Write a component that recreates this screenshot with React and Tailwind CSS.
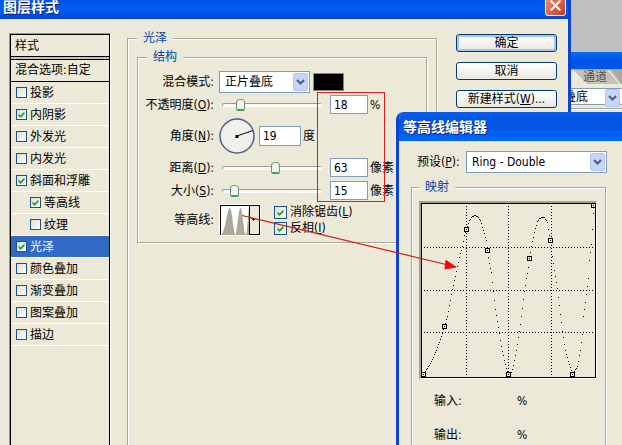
import React from 'react';
import { X } from 'lucide-react';

const styles = [
    { name: '投影' },
    { name: '内阴影', checked: true },
    { name: '外发光' },
    { name: '内发光' },
    { name: '斜面和浮雕', checked: true },
    { name: '等高线', checked: true, nested: true },
    { name: '纹理', nested: true },
    { name: '光泽', checked: true, active: true },
    { name: '颜色叠加' },
    { name: '渐变叠加' },
    { name: '图案叠加' },
    { name: '描边' },
];

// Ring - Double contour, on a 174 x 174 grid
const curve = [
    [2, 171], [9, 160], [15, 147], [20, 133], [23, 123], [26, 113], [28, 102], [31, 86], [34, 73],
    [36, 63], [39, 50], [41, 43], [43, 32], [45, 26], [48, 17], [51, 13], [54, 12], [56, 13],
    [59, 17], [62, 27], [65, 37], [66, 47], [68, 60], [70, 69], [72, 88], [74, 106], [78, 130],
    [80, 143], [83, 157], [85, 165], [87, 171], [90, 169], [92, 162], [95, 147], [98, 128],
    [100, 113], [103, 88], [105, 75], [107, 64], [108, 55], [110, 43], [113, 29], [116, 18],
    [118, 15], [121, 14], [123, 14], [126, 19], [127, 26], [129, 37], [131, 53], [133, 67],
    [136, 85], [138, 102], [141, 128], [144, 147], [147, 158], [150, 167], [151, 171], [156, 163],
    [159, 147], [161, 131], [162, 113], [164, 99], [167, 75], [168, 57], [170, 41], [171, 26],
    [172, 10], [173, 2],
];

const handles = [[2, 171], [23, 123], [45, 26], [66, 47], [87, 171], [108, 55], [129, 37], [151, 171], [172, 2]];

const dots = [];
for (let i = 0; i < curve.length - 1; i++) {
    const [x1, y1] = curve[i];
    const [x2, y2] = curve[i + 1];
    for (let x = x1; x < x2; x++) {
        dots.push([x, Math.round(y1 + ((y2 - y1) * (x - x1)) / (x2 - x1))]);
    }
}

const Check = ({ id, checked, small }) => (
    <span className="grid shrink-0">
        <input
            id={id}
            type="checkbox"
            defaultChecked={checked}
            className={`peer col-start-1 row-start-1 appearance-none border border-[#1d5281] bg-linear-to-br from-[#dcdcd7] to-white ${small ? 'size-[11px]' : 'size-[13px]'}`}
        />
        <svg viewBox="0 0 11 11" className="pointer-events-none invisible col-start-1 row-start-1 size-[11px] place-self-center peer-checked:visible">
            <path d="M2.5 4.5v2.4l2 2 4-4V2.5l-4 4z" fill="#21a121" />
        </svg>
    </span>
);

const Select = ({ id, value, className }) => (
    <span className={`grid ${className}`}>
        <select id={id} className="col-start-1 row-start-1 h-[22px] w-full appearance-none border border-[#7f9db9] bg-white pl-[5px] pr-5">
            <option>{value}</option>
        </select>
        <Arrow />
    </span>
);

const Arrow = () => (
    <svg viewBox="0 0 15 18" className="pointer-events-none col-start-1 row-start-1 mr-[2px] h-[18px] w-[15px] self-center justify-self-end">
        <rect x="0.5" y="0.5" width="14" height="17" rx="1.5" fill="#c5d5fc" stroke="#b3c7f4" />
        <path d="M4 7l3.5 3.5L11 7" fill="none" stroke="#4d6185" strokeWidth="2.2" />
    </svg>
);

const Group = ({ title, inset, className, children }) => (
    <fieldset className={`min-w-0 border border-[#aca899] shadow-[1px_1px_0_#fff,inset_1px_1px_0_#fff] ${className}`}>
        <legend className={`bg-[#ece9d8] px-[6px] text-[#0046a8] ${inset ? 'ml-[9px]' : ''}`}>{title}</legend>
        {children}
    </fieldset>
);

const FieldLabel = ({ id, text, hotkey }) => (
    <label htmlFor={id} className="w-[76px] shrink-0 whitespace-nowrap text-right">
        {text}{hotkey && <>(<u>{hotkey}</u>)</>}:
    </label>
);

const NumberInput = ({ id, value, className }) => (
    <input id={id} defaultValue={value} className={`border border-[#7f9db9] bg-white pl-[3px] ${className}`} />
);

const SliderRow = ({ id, text, hotkey, value, position, unit }) => (
    <div className="flex h-[19px] items-center">
        <FieldLabel id={id} text={text} hotkey={hotkey} />
        <input
            type="range"
            aria-label={text}
            defaultValue={position}
            className="ml-2 h-3 w-[100px] shrink-0 appearance-none bg-transparent [&::-webkit-slider-runnable-track]:h-[4px] [&::-webkit-slider-runnable-track]:rounded-xs [&::-webkit-slider-runnable-track]:border [&::-webkit-slider-runnable-track]:border-[#9d9c99] [&::-webkit-slider-runnable-track]:border-b-white [&::-webkit-slider-runnable-track]:border-r-white [&::-webkit-slider-runnable-track]:bg-[#f8f7f1] [&::-webkit-slider-thumb]:mt-[-5px] [&::-webkit-slider-thumb]:h-3 [&::-webkit-slider-thumb]:w-[9px] [&::-webkit-slider-thumb]:appearance-none [&::-webkit-slider-thumb]:rounded-t-[4px] [&::-webkit-slider-thumb]:rounded-b-[2px] [&::-webkit-slider-thumb]:border [&::-webkit-slider-thumb]:border-[#778892] [&::-webkit-slider-thumb]:border-t-[#4fb84f] [&::-webkit-slider-thumb]:border-b-2 [&::-webkit-slider-thumb]:border-b-[#38a850] [&::-webkit-slider-thumb]:bg-[#f3f3ef]"
        />
        <NumberInput id={id} value={value} className="ml-2 h-[19px] w-[38px] shrink-0" />
        <span className="ml-[2px] whitespace-nowrap">{unit}</span>
    </div>
);

const DialogButton = ({ primary, children }) => (
    <button
        className={`h-[18px] whitespace-nowrap rounded-[3px] border border-[#003c74] bg-linear-to-b from-white to-[#e9e8e0] leading-4 ${primary ? 'shadow-[inset_0_0_0_2px_#a9c4f0]' : ''}`}
    >
        {children}
    </button>
);

const BackPanel = () => (
    <div className="absolute -bottom-4 right-0 top-[52px] w-[60px] bg-[#ece9d8]">
        <div className="h-[17px] bg-linear-to-b from-[#0a6cf5] via-[#0054e3] to-[#0058ee]" />
        <div className="grid h-[15px]">
            <svg viewBox="0 0 60 15" className="col-start-1 row-start-1 h-[15px] w-[60px]">
                <rect width="60" height="15" fill="#aaa8a2" />
                <path d="M0 1h11l13 14H0z" fill="#ece9d8" />
                <path d="M12 1h38l9 14H24z" fill="#c3c1b8" />
                <path d="M11 1l13 14M46 1l12 14" fill="none" stroke="#fff" />
            </svg>
            <span className="col-start-1 row-start-1 pl-[21px] leading-[17px] text-[#55534d]">通道</span>
        </div>
        <div className="mt-1 grid h-[17px] border-y border-[#7f9db9] bg-white">
            <span className="col-start-1 row-start-1 pl-[2px] leading-[17px]">叠底</span>
            <Arrow />
        </div>
        <div className="mt-[3px] border-t border-[#aca899] bg-white pt-px" />
    </div>
);

const StyleList = () => (
    <div className="mt-[14px] w-[102px] shrink-0 border-l border-t border-r border-[#9a988a] border-r-white">
        <div className="h-full border-x border-t border-black">
            <div className="h-[22px] border-b border-black pl-1 leading-[22px]">样式</div>
            <div className="h-[2px] bg-[#c9bfc0]" />
            <div className="h-[23px] border-y border-black pl-1 leading-[21px]">混合选项:自定</div>
            <ul>
                {styles.map((s) => (
                    <li
                        key={s.name}
                        className={`flex h-[22px] items-center gap-[3px] border-b border-white ${s.nested ? 'pl-[19px]' : 'pl-[5px]'} ${s.active ? 'bg-[#316ac5] text-white' : ''}`}
                    >
                        <Check id={s.name} checked={s.checked} small />
                        <label htmlFor={s.name}>{s.name}</label>
                    </li>
                ))}
            </ul>
        </div>
    </div>
);

const ContourThumb = () => (
    <svg viewBox="0 0 42 32" className="ml-[5px] h-8 w-[42px] shrink-0">
        <rect width="42" height="32" fill="#fff" />
        <rect x="1.5" y="1.5" width="39" height="29" fill="#ece9d8" stroke="#000" />
        <rect x="2" y="2" width="28" height="29" fill="#fff" />
        <path d={`M2 31 ${curve.map(([x, y]) => `L${2 + x * 0.162} ${2 + y * 0.168}`).join(' ')} V31z`} fill="#aca899" />
        <path d="M30.5 1v30" stroke="#000" />
        <path d="M32 14h5l-2.500 3z" fill="#000" />
    </svg>
);

const LayerStyleDialog = () => (
    <div className="absolute -bottom-4 left-0 right-[51px] top-0 flex flex-col border-r-[3px] border-[#0842d6] bg-[#ece9d8]">
        <div className="flex h-[19px] shrink-0 items-end justify-between bg-linear-to-b from-[#0055e5] via-[#005cf5] to-[#0048d8] pl-[3px] pr-[2px]">
            <h1 className="pb-[5px] text-[14px] font-bold leading-[14px] text-white [text-shadow:1px_1px_0_#0a246a]">图层样式</h1>
            <button aria-label="关闭" className="mb-[3px] flex size-[21px] shrink-0 items-center justify-center rounded-[3px] border border-white bg-linear-to-br from-[#f0906f] to-[#c8371a] text-white">
                <X size={17} strokeWidth={3} />
            </button>
        </div>
        <div className="flex min-h-0 flex-1 pl-[9px] pr-[11px]">
            <StyleList />
            <Group title="光泽" className="ml-4 mt-3 flex-1 px-[9px] pt-[5px]">
                <Group title="结构" inset className="pb-[6px] pt-[7px]">
                    <div className="flex items-center">
                        <FieldLabel id="blend" text="混合模式" />
                        <Select id="blend" value="正片叠底" className="ml-[5px] w-[91px]" />
                        <button aria-label="颜色" className="ml-[3px] h-[18px] w-[31px] border border-[#8a887c] bg-black" />
                    </div>
                    <div className="mt-[2px]">
                        <SliderRow id="opacity" text="不透明度" hotkey="O" value="18" position={15} unit="%" />
                    </div>
                    <div className="my-1 flex items-center">
                        <FieldLabel id="angle" text="角度" hotkey="N" />
                        <svg viewBox="0 0 36 36" className="ml-[5px] size-9 shrink-0">
                            <circle cx="18" cy="18" r="17" fill="#f1f0ec" stroke="#51618f" strokeWidth="1.500" />
                            <path d="M18 18l16-5.500" stroke="#000" />
                            <rect x="16.500" y="17" width="3" height="3" />
                        </svg>
                        <NumberInput id="angle" value="19" className="ml-1 h-5 w-[42px]" />
                        <span className="ml-[2px]">度</span>
                    </div>
                    <SliderRow id="distance" text="距离" hotkey="D" value="63" position={54} unit="像素" />
                    <div className="mt-1">
                        <SliderRow id="size" text="大小" hotkey="S" value="15" position={8} unit="像素" />
                    </div>
                    <div className="mt-1 flex items-center">
                        <span className="w-[76px] shrink-0 text-right">等高线:</span>
                        <ContourThumb />
                        <div className="ml-[13px] flex flex-col gap-[2px]">
                            <div className="flex items-center gap-[3px]">
                                <Check id="antialias" checked />
                                <label htmlFor="antialias">消除锯齿(<u>L</u>)</label>
                            </div>
                            <div className="flex items-center gap-[3px]">
                                <Check id="invert" checked />
                                <label htmlFor="invert">反相(<u>I</u>)</label>
                            </div>
                        </div>
                    </div>
                </Group>
            </Group>
            <div className="ml-[19px] mt-[15px] flex w-[101px] shrink-0 flex-col gap-[10px]">
                <DialogButton primary>确定</DialogButton>
                <DialogButton>取消</DialogButton>
                <DialogButton>新建样式(<u>W</u>)...</DialogButton>
            </div>
        </div>
    </div>
);

const ContourGraph = () => (
    <div className="w-[178px] border-l-2 border-t-2 border-b border-r border-[#a5a396] border-b-white border-r-white">
        <svg viewBox="0 0 175 175" className="block w-full" shapeRendering="crispEdges">
            <rect x="0.5" y="0.5" width="174" height="174" fill="none" stroke="#000" />
            <path d="M45.500 0v175M87.500 0v175M130.500 0v175M0 44.500h175M0 87.500h175M0 129.500h175" stroke="#000" strokeDasharray="1 2" />
            {dots.map(([x, y]) => (
                <rect key={x} x={x} y={y} width="1" height="1" />
            ))}
            {handles.map(([x, y]) => (
                <g key={x}>
                    <rect x={x - 1.5} y={y - 1.5} width="4" height="4" fill="#ece9d8" stroke="#000" />
                    <rect x={x} y={y} width="1" height="1" />
                </g>
            ))}
        </svg>
    </div>
);

const ContourEditor = () => (
    <div className="absolute -bottom-4 -right-4 left-[396px] top-[112px] overflow-hidden rounded-tl-lg border-l-[3px] border-[#0842d6] bg-[#ece9d8]">
        <div className="flex h-[29px] items-center bg-linear-to-b from-[#0a5ae8] via-[#0055e5] to-[#0066ff] pl-1">
            <h2 className="text-[14px] font-bold text-white [text-shadow:1px_1px_0_#0a246a]">等高线编辑器</h2>
        </div>
        <div className="flex items-center pl-[18px] pt-[10px]">
            <label htmlFor="preset" className="w-[49px]">预设(<u>P</u>):</label>
            <Select id="preset" value="Ring - Double" className="w-[141px]" />
        </div>
        <Group title="映射" className="ml-3 mr-8 mt-[7px] h-[300px] pl-[7px] pt-[7px]">
            <ContourGraph />
            <div className="ml-[15px] mt-[15px] grid grid-cols-[83px_auto] gap-y-5">
                <span>输入:</span>
                <span>%</span>
                <span>输出:</span>
                <span>%</span>
            </div>
        </Group>
    </div>
);

const App = () => {
    return (
        <div className="relative h-screen overflow-hidden bg-[#c0c0c0] font-['DejaVu_Sans_Condensed','Noto_Sans_CJK_SC',sans-serif] text-[12px] leading-[14px] text-black">
            <BackPanel />
            <LayerStyleDialog />
            <ContourEditor />

            {/* Red annotations */}
            <div className="pointer-events-none absolute left-[317px] top-[92px] h-[110px] w-[68px] border border-[#d8201c]" />
            <svg viewBox="0 0 220 60" className="pointer-events-none absolute left-[240px] top-[212px] h-[60px] w-[220px]">
                <path d="M2 3.500L206 52.500" stroke="#c82018" strokeWidth="1.200" />
                <path d="M206 48.500l10 6.500-11 2z" fill="#f00a0a" stroke="#f00a0a" />
            </svg>
        </div>
    );
};

export default App;
